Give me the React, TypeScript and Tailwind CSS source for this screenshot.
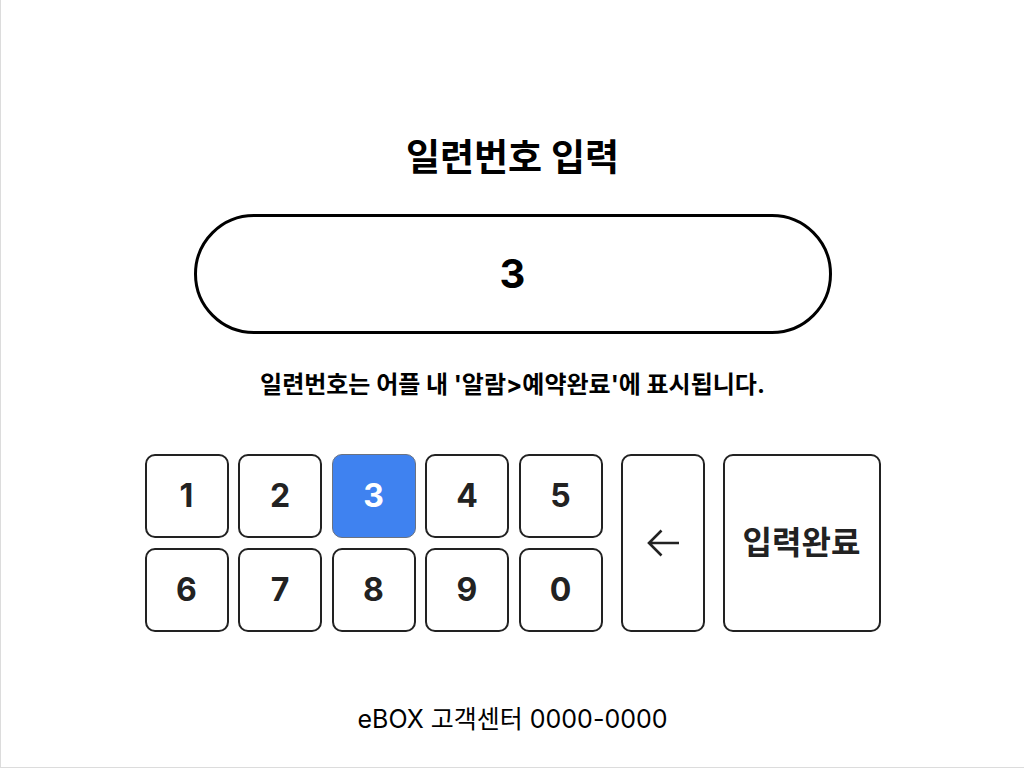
import { useState } from "react";

const digits = ["1", "2", "3", "4", "5", "6", "7", "8", "9", "0"];

export default function App() {
  const [code, setCode] = useState("3");
  const active = code.slice(-1);

  return (
    <div
      className="flex h-[768px] w-[1024px] flex-col items-center border-b border-l border-[#dcdcdc] bg-white text-black"
      style={{ fontFamily: "Inter, 'Noto Sans CJK KR', sans-serif" }}
    >
      <h1 className="mt-[134px] text-[37px] font-bold leading-[48px]">일련번호 입력</h1>

      <div className="mt-[32px] flex h-[120px] w-[638px] items-center justify-center rounded-full border-[3px] border-black">
        <span className="text-[40px] font-bold">{code}</span>
      </div>

      <p className="mt-[35px] text-[24px] font-bold leading-[32px]">일련번호는 어플 내 '알람&gt;예약완료'에 표시됩니다.</p>

      <div className="mt-[53px] flex gap-[18px]">
        <div className="grid grid-cols-5 gap-x-[9.5px] gap-y-[10px]">
          {digits.map((d) => (
            <button
              key={d}
              onClick={() => setCode((c) => c + d)}
              className={`flex h-[84px] w-[84px] items-center justify-center rounded-[10px] text-[32px] font-bold ${
                active === d ? "border border-[#6b7280] bg-[#3f82f0] text-white" : "border-2 border-[#222] bg-white text-[#222]"
              }`}
            >
              {d}
            </button>
          ))}
        </div>
        <button
          onClick={() => setCode((c) => c.slice(0, -1))}
          className="flex h-[178px] w-[84px] items-center justify-center rounded-[10px] border-2 border-[#222]"
          aria-label="지우기"
        >
          <svg width="32" height="28" viewBox="0 0 32 28" fill="none" stroke="#222" strokeWidth="2.6">
            <path d="M14.5 1.5 2 14l12.5 12.5M2 14h30" />
          </svg>
        </button>
        <button className="flex h-[178px] w-[158px] items-center justify-center rounded-[10px] border-2 border-[#222] text-[32px] font-bold text-[#222]">
          입력완료
        </button>
      </div>

      <p className="mt-[71px] text-[25px] leading-[32px]">eBOX 고객센터 0000-0000</p>
    </div>
  );
}
